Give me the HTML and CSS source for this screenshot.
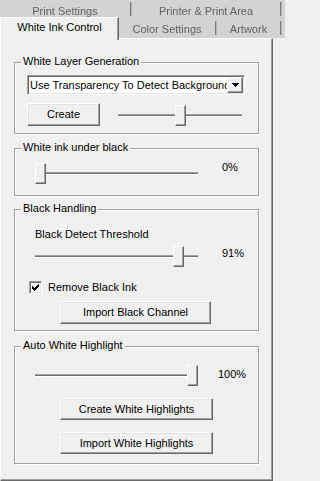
FILE: index.html
```html
<!DOCTYPE html>
<html>
<head>
<meta charset="utf-8">
<link rel="stylesheet" href="styles.css">
</head>
<body>
<div class="tabstrip">
  <div class="tabrow back">
    <div class="tab t-print">Print Settings</div><div class="sep"></div>
    <div class="tab t-printer">Printer &amp; Print Area</div><div class="sep"></div>
  </div>
  <div class="tabrow front">
    <div class="tab active">White Ink Control</div>
    <div class="tab t-color">Color Settings</div><div class="sep"></div>
    <div class="tab t-art">Artwork</div><div class="sep"></div>
  </div>
</div>
<div class="panel">
  <section class="group g1">
    <div class="legend">White Layer Generation</div>
    <div class="combo">
      <span class="combo-text">Use Transparency To Detect Background</span>
      <span class="combo-btn"><svg width="7" height="4" viewBox="0 0 7 4" shape-rendering="crispEdges"><path d="M0 0h7v1h-1v1h-1v1h-1v1h-1v-1h-1v-1h-1v-1h-1z" fill="#000"/></svg></span>
    </div>
    <div class="row r-create">
      <div class="btn btn-create">Create</div>
      <div class="slider s-gen">
        <div class="track"></div>
        <div class="thumb" style="left: calc(0.5 * (100% - 11px))"></div>
      </div>
    </div>
  </section>

  <section class="group g2">
    <div class="legend">White ink under black</div>
    <div class="row r-slider r-under">
      <div class="slider s-wide">
        <div class="track"></div>
        <div class="thumb" style="left: calc(0 * (100% - 11px))"></div>
      </div>
      <div class="val val-a">0%</div>
    </div>
  </section>

  <section class="group g3">
    <div class="legend">Black Handling</div>
    <div class="caption">Black Detect Threshold</div>
    <div class="row r-slider r-thresh">
      <div class="slider s-wide">
        <div class="track"></div>
        <div class="thumb" style="left: calc(0.91 * (100% - 11px))"></div>
      </div>
      <div class="val val-b">91%</div>
    </div>
    <label class="checkrow">
      <span class="check"><svg width="7" height="7" viewBox="0 0 7 7" shape-rendering="crispEdges"><path d="M0 2h1v1h1v1h1v-1h1v-1h1v-1h1v-1h1v3h-1v1h-1v1h-1v1h-1v1h-1v-1h-1v-1h-1z" fill="#000"/></svg></span>
      <span class="checklabel">Remove Black Ink</span>
    </label>
    <div class="btn btn-wide btn-black">Import Black Channel</div>
  </section>

  <section class="group g4">
    <div class="legend">Auto White Highlight</div>
    <div class="row r-slider r-auto">
      <div class="slider s-wide">
        <div class="track"></div>
        <div class="thumb" style="left: calc(1 * (100% - 11px))"></div>
      </div>
      <div class="val val-c">100%</div>
    </div>
    <div class="btn btn-wide btn-hl btn-hl1">Create White Highlights</div>
    <div class="btn btn-wide btn-hl btn-hl2">Import White Highlights</div>
  </section>
</div>
</body>
</html>
```

FILE: styles.css
```css
html {
  background: #f0f0f0;
}
html, body {
  margin: 0;
  padding: 0;
}
body {
  width: 285px;
  height: 481px;
  overflow: hidden;
  background: #f0f0f0;
  font-family: "Liberation Sans", Arial, sans-serif;
  font-size: 11px;
  line-height: 13px;
  color: #000;
}

/* ---------- tabs ---------- */
.tabstrip {
  background: #d3d3d3;
  width: 285px;
}
.tabrow {
  display: flex;
  align-items: flex-start;
}
.tabrow.back {
  height: 17px;
}
.tabrow.front {
  height: 21px;
}
.tab {
  box-sizing: border-box;
  text-align: center;
  white-space: nowrap;
  color: #626262;
  filter: blur(0.45px);
}
.back .tab {
  padding-top: 5px;
  height: 17px;
}
.front .tab {
  padding-top: 6px;
  height: 21px;
}
.t-print { width: 130px; }
.t-printer { width: 148px; }
.t-color { width: 96px; }
.t-art { width: 63px; }
.sep {
  width: 1px;
  height: 14px;
  border-right: 1px solid #b4b4b4;
  background: #7a7a7a;
  filter: blur(0.4px);
}
.back .sep { margin-top: 2px; }
.front .sep { margin-top: 4px; }

.front .tab.active {
  position: relative;
  z-index: 1;
  width: 119px;
  height: 23px;
  padding-top: 3px;
  background: #f0f0f0;
  color: #000;
  filter: none;
  border-top: 1px solid #fff;
  border-left: 1px solid #fff;
  border-right: 1px solid #696969;
  box-shadow: inset -1px 0 0 #a0a0a0;
}

/* ---------- panel ---------- */
.panel {
  box-sizing: border-box;
  width: 273px;
  height: 443px;
  background: #f0f0f0;
  border-top: 1px solid #fff;
  border-left: 1px solid #fff;
  border-right: 1px solid #696969;
  border-bottom: 1px solid #696969;
  box-shadow: inset -1px -1px 0 #a0a0a0;
  padding: 23px 0 0 13px;
  display: flex;
  flex-direction: column;
  align-items: flex-start;
}

.group {
  box-sizing: border-box;
  width: 245px;
  border: 1px solid #a0a0a0;
  box-shadow: inset 1px 1px 0 #fff, 1px 1px 0 #fff;
  display: flex;
  flex-direction: column;
  align-items: flex-start;
}
.g1 { height: 72px; }
.g2 { height: 48px; margin-top: 14px; }
.g3 { height: 122px; margin-top: 13px; }
.g4 { height: 118px; margin-top: 15px; }

.legend {
  margin: -8px 0 0 6px;
  padding: 0 2px;
  background: #f0f0f0;
  white-space: nowrap;
}

/* ---------- combo ---------- */
.combo {
  box-sizing: border-box;
  margin: 7px 0 0 12px;
  width: 218px;
  height: 20px;
  padding: 1px;
  border: 1px solid;
  border-color: #a0a0a0 #fff #fff #a0a0a0;
  box-shadow: inset 1px 1px 0 #696969, inset -1px -1px 0 #e3e3e3;
  background: #fff;
  display: flex;
  align-items: center;
}
.combo-text {
  flex: 1;
  min-width: 0;
  overflow: hidden;
  white-space: nowrap;
  padding-left: 1px;
}
.combo-btn {
  box-sizing: border-box;
  width: 16px;
  height: 16px;
  flex: none;
  background: #f0f0f0;
  border: 1px solid;
  border-color: #fff #696969 #696969 #fff;
  box-shadow: inset -1px -1px 0 #a0a0a0;
  display: flex;
  align-items: center;
  justify-content: center;
}
.combo-btn svg { display: block; margin-left: 1px; }

/* ---------- buttons ---------- */
.btn {
  box-sizing: border-box;
  height: 23px;
  background: #f0f0f0;
  border: 1px solid;
  border-color: #fff #696969 #696969 #fff;
  box-shadow: inset -1px -1px 0 #a0a0a0, inset 1px 1px 0 #e3e3e3;
  display: flex;
  align-items: center;
  justify-content: center;
  white-space: nowrap;
}
.btn-create {
  width: 73px;
  margin-left: 12px;
}
.btn-wide { margin-left: 45px; }
.btn-black { width: 151px; margin-top: 7px; }
.btn-hl { width: 153px; height: 22px; margin-top: 12px; }

/* ---------- rows ---------- */
.row {
  display: flex;
  align-items: flex-start;
}
.r-create { margin-top: 8px; }
.s-gen {
  width: 124px;
  margin: 2px 0 0 18px;
}
.r-slider { padding-left: 20px; }
.r-under { margin-top: 9px; }
.r-thresh { margin-top: 5px; }
.r-auto { margin-top: 13px; }

.caption {
  margin: 13px 0 0 20px;
  white-space: nowrap;
}

/* ---------- slider ---------- */
.slider {
  position: relative;
  height: 21px;
}
.s-wide { width: 163px; }
.track {
  margin-top: 9px;
  height: 1px;
  border-top: 1px solid #a0a0a0;
  border-bottom: 1px solid #fff;
  background: #727272;
}
.thumb {
  position: absolute;
  top: 0;
  box-sizing: border-box;
  width: 11px;
  height: 21px;
  background: #f0f0f0;
  border: 1px solid;
  border-color: #fff #696969 #696969 #fff;
  box-shadow: inset -1px -1px 0 #a0a0a0;
}

.val { white-space: nowrap; }
.val-a { margin: -2px 0 0 24px; }
.val-b { margin: 1px 0 0 24px; }
.val-c { margin: 3px 0 0 20px; }

/* ---------- checkbox ---------- */
.checkrow {
  display: flex;
  align-items: center;
  margin: 14px 0 0 14px;
}
.check {
  box-sizing: border-box;
  width: 13px;
  height: 13px;
  padding: 1px;
  border: 1px solid;
  border-color: #a0a0a0 #fff #fff #a0a0a0;
  box-shadow: inset 1px 1px 0 #696969, inset -1px -1px 0 #e3e3e3;
  background: #fff;
  display: flex;
  align-items: center;
  justify-content: center;
}
.check svg { display: block; }
.checklabel {
  margin-left: 6px;
  white-space: nowrap;
}
```
